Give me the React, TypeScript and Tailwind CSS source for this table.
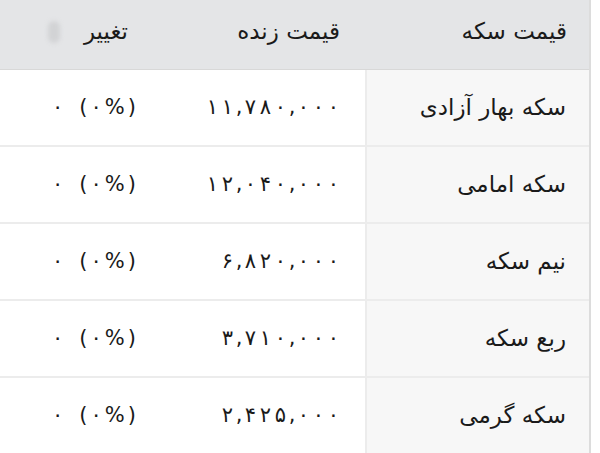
import React from "react";

const rows = [
  { name: "سکه بهار آزادی", price: "۱۱,۷۸۰,۰۰۰" },
  { name: "سکه امامی", price: "۱۲,۰۴۰,۰۰۰" },
  { name: "نیم سکه", price: "۶,۸۲۰,۰۰۰" },
  { name: "ربع سکه", price: "۳,۷۱۰,۰۰۰" },
  { name: "سکه گرمی", price: "۲,۴۲۵,۰۰۰" },
];

// letter-spacing is ignored for Persian digits, so space them out per glyph
function Spaced({ text }: { text: string }) {
  return (
    <span dir="ltr" className="inline-flex">
      {text.split("").map((ch, i) => (
        <span key={i} className={ch === "," ? "inline-block w-[8px] text-center" : "inline-block w-[15px] text-center"}>
          {ch}
        </span>
      ))}
    </span>
  );
}

export default function App() {
  return (
    <div className="w-[600px] h-[453px] overflow-hidden bg-white" style={{ fontFamily: '"DejaVu Sans", sans-serif' }}>
      <div dir="rtl" className="w-[591px] border-r-2 border-[#dcdcdc] text-[#1a1a1a]">
        <div className="grid grid-cols-[224px_205px_160px] h-[70px] bg-[#e4e5e7] border-b border-[#d8d8d8] items-center text-[23px] pb-[6px]">
          <div className="pr-[22px]">قیمت سکه</div>
          <div className="pr-[25px]">قیمت زنده</div>
          <div className="pr-[32px] flex items-center gap-[24px]">
            <span>تغییر</span>
            <span className="w-[12px] h-[22px] rounded-full bg-[#d2d3d5] blur-[2px]" />
          </div>
        </div>
        {rows.map((r) => (
          <div key={r.name} className="grid grid-cols-[224px_205px_160px] h-[77px] border-b-2 border-[#ececec] items-center">
            <div className="h-full flex items-center pr-[23px] bg-[#f7f7f7] border-l-2 border-[#ececec] text-[23px]">
              {r.name}
            </div>
            <div className="pr-[24px] text-[21px]">
              <Spaced text={r.price} />
            </div>
            <div className="pr-[24px] text-[21px]">
              <span dir="ltr" className="inline-flex items-center gap-[16px]">
                <span>۰</span>
                <span className="inline-flex items-center gap-[3px]">
                  <span>(</span>
                  <span>۰</span>
                  <span>%</span>
                  <span>)</span>
                </span>
              </span>
            </div>
          </div>
        ))}
      </div>
    </div>
  );
}
